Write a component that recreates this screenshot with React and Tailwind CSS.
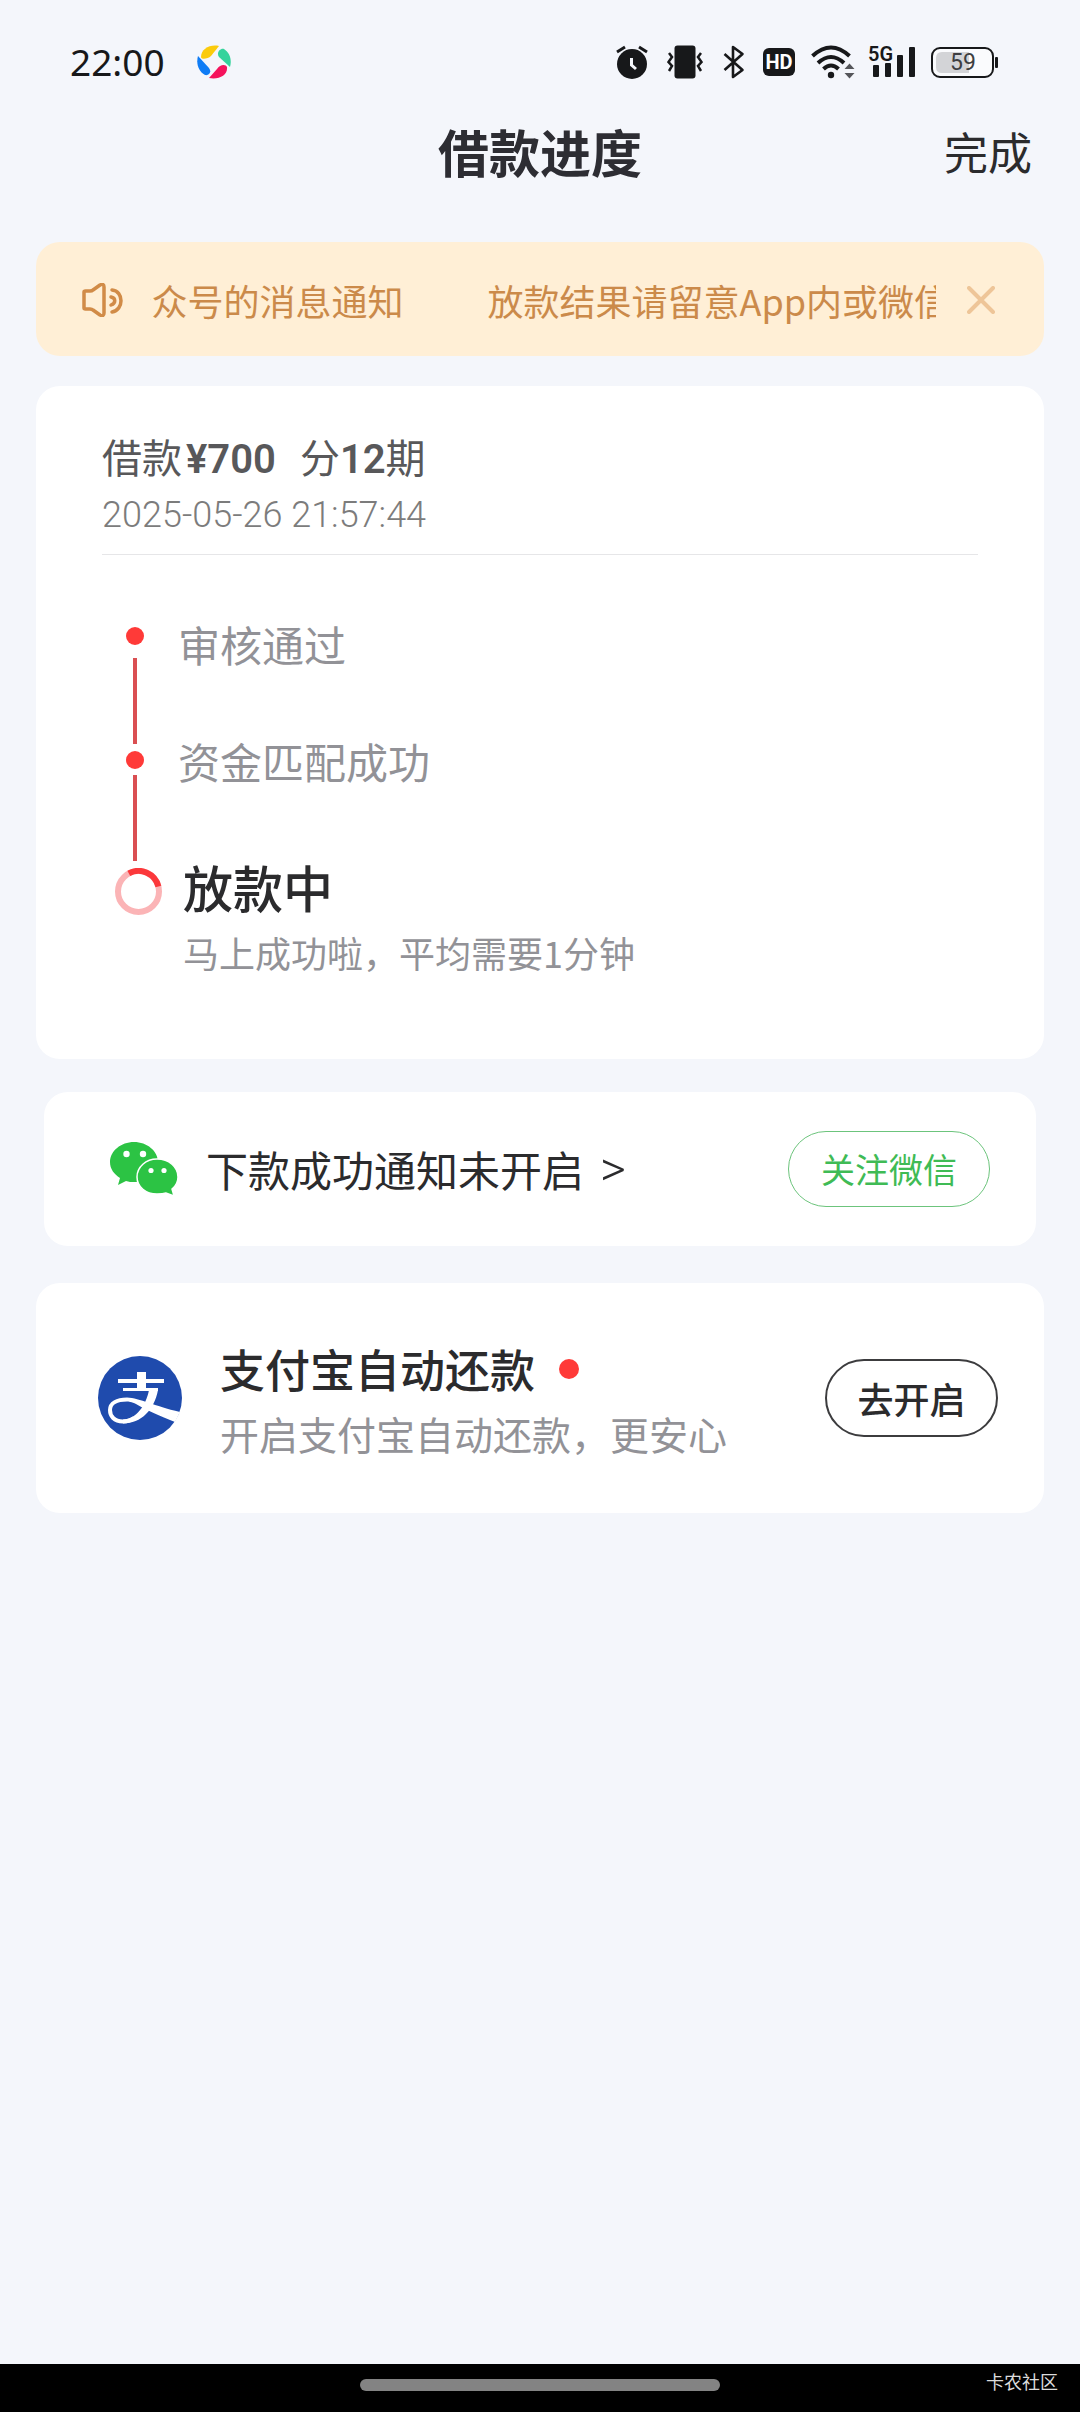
import React, { useState } from 'react';

const NOTICE = '放款结果请留意App内或微信公众号的消息通知';

function AppLogo() {
  return (
    <svg width="34" height="34" viewBox="0 0 34 34">
      <path d="M4 12 C4 4 13 -1 22 1 L14 11 C11 14 4 15 4 12 Z" fill="#fbcb0c" />
      <path d="M22 12 C19 8 23 3 27 4 C33 8 35 15 33 22 Z" fill="#35d39c" />
      <path d="M30 22 C31 30 22 35 12 33 L20 24 C23 19 29 19 30 22 Z" fill="#f5125c" />
      <path d="M1 11 L12 23 C15 27 12 31 8 30 C1 26 -1 18 1 11 Z" fill="#0f7cf5" />
    </svg>
  );
}

function StatusIcons() {
  return (
    <div className="flex items-center text-[#17181a]">
      {/* alarm */}
      <svg width="32" height="34" viewBox="0 0 32 34">
        <circle cx="16" cy="19" r="15" fill="currentColor" />
        <path d="M1 7 L9 2 M31 7 L23 2" stroke="currentColor" strokeWidth="3" fill="none" />
        <path d="M15.500 13 V20 L20 24" stroke="#f4f6fb" strokeWidth="3" fill="none" />
      </svg>
      {/* vibrate */}
      <svg className="ml-[19px]" width="36" height="34" viewBox="0 0 36 34">
        <rect x="7.500" y="0.500" width="21" height="33" rx="3" fill="currentColor" />
        <path d="M2 8 L5 12 L1.500 17 L5 21 L2 26 M34 8 L31 12 L34.500 17 L31 21 L34 26" stroke="currentColor" strokeWidth="2.500" fill="none" />
      </svg>
      {/* bluetooth */}
      <svg className="ml-5" width="22" height="34" viewBox="0 0 22 34">
        <path d="M1.500 9 L19.500 25 L10 32 V2 L19.500 9 L1.500 25" stroke="currentColor" strokeWidth="2.600" strokeLinejoin="round" fill="none" />
      </svg>
      <span className="ml-[18px] flex h-7 w-8 items-center justify-center rounded-md bg-[#17181a] font-[Roboto] text-[20px] font-bold leading-7 text-white">HD</span>
      {/* wifi */}
      <svg className="ml-4" width="45" height="34" viewBox="0 0 45 34">
        <path d="M1.500 11 Q20 -6 38.500 11" stroke="currentColor" strokeWidth="4" fill="none" />
        <path d="M7 18 Q20 6 33 18" stroke="currentColor" strokeWidth="4" fill="none" />
        <path d="M12.500 24 Q20 17 27.500 24" stroke="currentColor" strokeWidth="4" fill="none" />
        <circle cx="20" cy="30" r="3.200" fill="currentColor" />
        <path d="M33.500 24 L38.500 18.500 L43.500 24 Z M33.500 28 L38.500 33.500 L43.500 28 Z" fill="#55565a" />
      </svg>
      {/* signal */}
      <svg className="ml-[11px]" width="48" height="46" viewBox="-2 -6 48 46">
        <text x="-1" y="16" fontFamily="Roboto" fontSize="20" fontWeight="600" fill="currentColor">5G</text>
        <rect x="4" y="20" width="6" height="12" rx="1" fill="currentColor" />
        <rect x="16" y="18" width="6" height="14" rx="1" fill="currentColor" />
        <rect x="28" y="10" width="6" height="22" rx="1" fill="currentColor" />
        <rect x="40" y="2" width="6" height="30" rx="1" fill="currentColor" />
      </svg>
      {/* battery */}
      <svg className="ml-4" width="67" height="34" viewBox="0 0 67 34">
        <rect x="1" y="3" width="61" height="29" rx="8" fill="#fafbfd" stroke="currentColor" strokeWidth="2" />
        <path d="M11 7 H38 V28 H11 Q5 28 5 22 V13 Q5 7 11 7 Z" fill="#d3d4d7" />
        <rect x="64" y="12" width="3" height="11" rx="1" fill="currentColor" />
        <text x="32" y="25" textAnchor="middle" fontFamily="Roboto" fontSize="23" fill="#3d3e41">59</text>
      </svg>
    </div>
  );
}

function SpeakerIcon() {
  return (
    <svg width="42" height="34" viewBox="0 0 42 34" fill="none" stroke="#d18b47" strokeWidth="3.500" strokeLinejoin="round" strokeLinecap="round">
      <path d="M2 9 Q2 8 3.500 8 H8 Q10 8 11 7 L18 2 Q22 0 22 4 V30 Q22 34 18 32 L11 27 Q10 26 8 26 H3.500 Q2 26 2 25 Z" />
      <path d="M30 7 C42 8 42 27 30 29" />
      <path d="M29 14 C34 15 34 20 29 22" />
    </svg>
  );
}

function WechatIcon() {
  return (
    <svg width="68" height="54" viewBox="0 0 68 54">
      <path d="M24 0 C37 0 48 9 48 20 C48 31 37 40 24 40 C21 40 19 40 16 39 L8 43 L10 36 C4 32 0 27 0 20 C0 9 11 0 24 0 Z" fill="#2cc344" />
      <path d="M47 17 C59 17 68 25 68 35 C68 40 66 44 62 47 L64 54 L56 51 C53 52 50 52 47 52 C36 52 27 45 27 35 C27 25 36 17 47 17 Z" fill="#2cc344" stroke="#fff" strokeWidth="1.500" />
      <circle cx="16.500" cy="12" r="3.200" fill="#fff" />
      <circle cx="33" cy="12" r="3.200" fill="#fff" />
      <circle cx="41" cy="28.500" r="2.600" fill="#fff" />
      <circle cx="54" cy="28.500" r="2.600" fill="#fff" />
    </svg>
  );
}

function AlipayIcon() {
  return (
    <svg width="84" height="84" viewBox="0 0 84 84">
      <circle cx="42" cy="42" r="42" fill="#1f4bad" />
      <g fill="#fff">
        <path d="M39 16 H48 V34 H39 Z" />
        <path d="M20 23 H66 V27 H20 Z" />
        <path d="M25 32 H60 V35 H25 Z" />
        <path d="M51 34 H60 C58 44 54 52 48 58 C42 64 34 67.500 25 67.500 V63.500 C38 63 48 50 51 34 Z" />
        <path d="M29 41.500 C42 42 56 50 82 56 L77 66 C62 60 48 54 38 48 C34 46 30 45.500 29 45.500 Z" />
      </g>
      <path d="M36 62 C33 64.500 30 65.500 25 65.500 C16 65.500 12 60 12 54 C12 47 19 43.500 29 43.500" fill="none" stroke="#fff" strokeWidth="4" />
    </svg>
  );
}

function LoadingRing() {
  return (
    <svg width="47" height="47" viewBox="0 0 47 47" fill="none" strokeWidth="6">
      <circle cx="23.500" cy="23.500" r="20.500" stroke="#fbb4b6" />
      <path d="M13.800 5.400 A20.500 20.500 0 0 1 43.400 18.500" stroke="#fb383b" />
    </svg>
  );
}

function NoticeBar({ onClose }) {
  return (
    <div className="mx-9 mt-[62px] flex h-[114px] items-center rounded-3xl bg-[#ffefd6] pl-[46px] pr-[49px] pt-0.5">
      <SpeakerIcon />
      <div className="ml-[26px] flex flex-1 overflow-hidden">
        <div className="flex -translate-x-[497px] gap-[84px] whitespace-nowrap text-[36px] leading-[52px] text-[#cb8a4a]">
          <span>{NOTICE}</span>
          <span>{NOTICE}</span>
        </div>
      </div>
      <button className="ml-[31px]" aria-label="关闭" onClick={onClose}>
        <svg width="28" height="28" viewBox="0 0 28 28">
          <path d="M2 2 L26 26 M26 2 L2 26" stroke="#eec598" strokeWidth="4" strokeLinecap="round" />
        </svg>
      </button>
    </div>
  );
}

function LoanCard() {
  return (
    <section className="mx-9 mt-[30px] rounded-3xl bg-white px-[66px] pb-[85px] pt-[42px]">
      <div className="flex h-14 items-baseline whitespace-nowrap text-[40px] leading-[56px] text-[#58585a]">
        <span>借款</span>
        <span className="ml-1 font-[Roboto] font-semibold">¥700</span>
        <span className="ml-6">分</span>
        <span className="font-[Roboto] font-semibold">12</span>
        <span>期</span>
      </div>
      <p className="mt-[6px] font-[Roboto] text-[36px] font-light leading-[50px] text-[#7c7c7c]">2025-05-26 21:57:44</p>
      <hr className="mt-[14px] border-t border-[#e6e6e8]" />

      <div className="mt-[65px] flex pl-[13px]">
        <div className="flex w-[63px] shrink-0 flex-col items-start pt-[7px]">
          <i className="ml-[11px] h-[18px] w-[18px] rounded-full bg-[#ff3a38]" />
          <i className="ml-[18px] mt-[13px] h-[86px] w-1 bg-[#da4f52]" />
          <i className="ml-[11px] mt-[7px] h-[18px] w-[18px] rounded-full bg-[#ff3a38]" />
          <i className="mb-[7px] ml-[18px] mt-[6px] h-[86px] w-1 bg-[#da4f52]" />
          <LoadingRing />
        </div>
        <ol className="text-[42px] leading-[48px] text-[#929297]">
          <li>审核通过</li>
          <li className="mt-[69px]">资金匹配成功</li>
          <li className="mt-[71px] pl-[5px]">
            <h2 className="text-[50px] font-medium leading-[60px] text-[#2b2b2d]">放款中</h2>
            <p className="mt-[14px] text-[36px] leading-[44px]">马上成功啦，平均需要1分钟</p>
          </li>
        </ol>
      </div>
    </section>
  );
}

function App() {
  const [showNotice, setShowNotice] = useState(true);

  return (
    <div className="flex min-h-screen flex-col bg-[#f4f6fb] font-['Noto_Sans_CJK_SC',sans-serif] text-[#2b2b2d]">
      <div className="flex h-[122px] items-center justify-between pl-[70px] pr-[82px] pt-0.5">
        <div className="flex items-center gap-8">
          <span className="font-['Noto_Sans'] text-[37px] leading-[44px] text-[#17181a]">22:00</span>
          <AppLogo />
        </div>
        <StatusIcons />
      </div>

      <header className="grid h-[58px] grid-cols-3 items-center px-12">
        <h1 className="col-start-2 text-center text-[51px] font-bold leading-[58px] text-[#2d2d33]">借款进度</h1>
        <button className="justify-self-end text-[44px] leading-[58px]">完成</button>
      </header>

      {showNotice && <NoticeBar onClose={() => setShowNotice(false)} />}

      <LoanCard />

      <section className="mx-11 mt-[33px] flex h-[154px] items-center rounded-3xl bg-white pl-[66px] pr-[46px]">
        <WechatIcon />
        <a href="#wechat" className="ml-7 flex items-center text-[42px] leading-[56px]">
          下款成功通知未开启
          <span className="ml-4 font-[Roboto] text-[50px] font-light">&gt;</span>
        </a>
        <button className="ml-auto h-[76px] w-[202px] rounded-full border border-[#6cc47c] text-[34px] leading-[48px] text-[#3fbb55]">关注微信</button>
      </section>

      <section className="mx-9 mt-[37px] flex h-[230px] items-center rounded-3xl bg-white pl-[62px] pr-[46px]">
        <AlipayIcon />
        <div className="ml-[38px] pt-[6px]">
          <h2 className="flex items-center text-[45px] font-medium leading-[60px]">
            支付宝自动还款
            <i className="ml-6 h-5 w-5 rounded-full bg-[#ff3a38]" />
          </h2>
          <p className="mt-1 text-[39px] leading-[60px] text-[#929297]">开启支付宝自动还款，更安心</p>
        </div>
        <button className="ml-auto h-[78px] w-[173px] rounded-full border-2 border-[#3c3c3e] text-[36px] font-medium leading-[48px]">去开启</button>
      </section>

      <footer className="mt-auto grid h-12 grid-cols-3 items-start bg-black px-[22px] pt-[7px]">
        <div className="col-start-2 mt-2 h-3 w-[360px] justify-self-center rounded-full bg-[#838383]" />
        <span className="justify-self-end text-[18px] leading-5 text-[#dcdcdc]">卡农社区</span>
      </footer>
    </div>
  );
}

export default App;
